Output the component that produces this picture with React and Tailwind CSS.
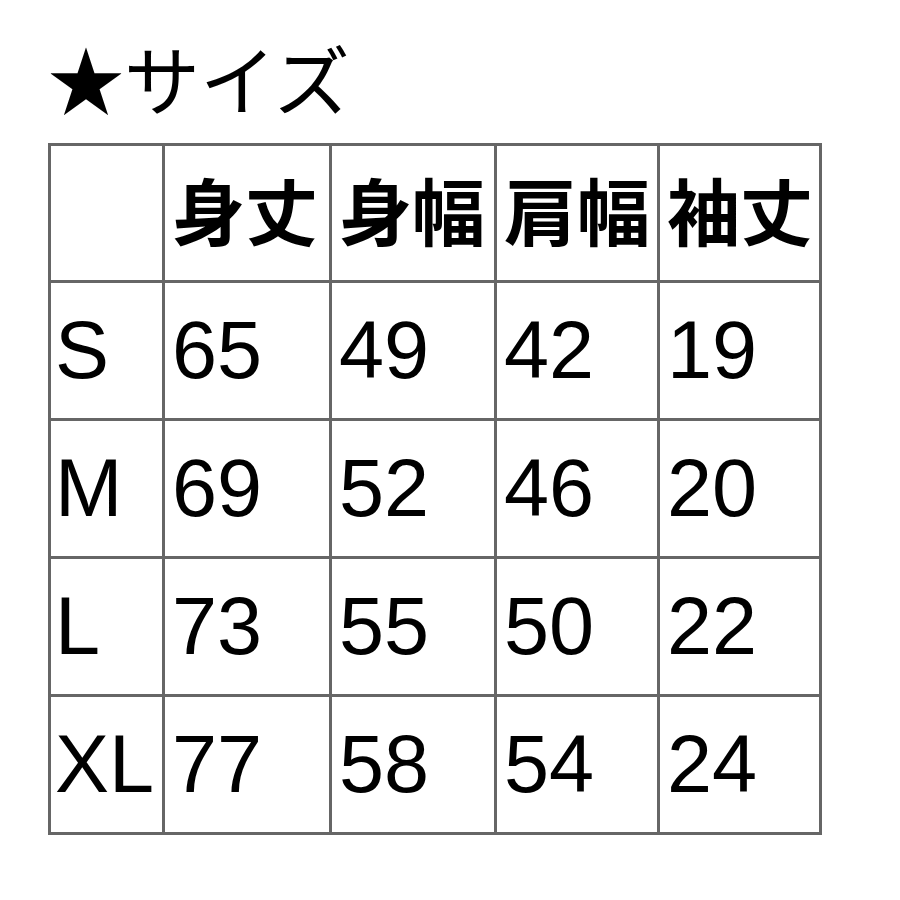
const headers = ["身丈", "身幅", "肩幅", "袖丈"];
const rows = [
  ["S", "65", "49", "42", "19"],
  ["M", "69", "52", "46", "20"],
  ["L", "73", "55", "50", "22"],
  ["XL", "77", "58", "54", "24"],
];
const widths = [114, 167, 165, 163, 162];

export default function App() {
  return (
    <div className="min-h-[900px] bg-white pl-[48px] pt-[29px] text-black">
      <h1
        className="text-[76px] leading-[96px] font-normal mb-[18px]"
        style={{ fontFamily: '"Noto Sans CJK JP", sans-serif' }}
      >
        ★サイズ
      </h1>
      <table className="table-fixed border-collapse w-[771px] border-[3px] border-[#666]">
        <colgroup>
          {widths.map((w, i) => (
            <col key={i} style={{ width: w }} />
          ))}
        </colgroup>
        <thead>
          <tr className="h-[137px]">
            <th className="border-[3px] border-[#666]"></th>
            {headers.map((h) => (
              <th
                key={h}
                className="border-[3px] border-[#666] px-[7px] pb-[10px] text-left text-[73px] font-bold leading-none whitespace-nowrap"
                style={{ fontFamily: '"Noto Sans CJK JP", sans-serif' }}
              >
                {h}
              </th>
            ))}
          </tr>
        </thead>
        <tbody>
          {rows.map((r) => (
            <tr key={r[0]} className="h-[138px]">
              {r.map((c, i) => (
                <td
                  key={i}
                  className={`border-[3px] border-[#666] text-left text-[81px] leading-none whitespace-nowrap ${i === 0 ? "px-[4px]" : "px-[7px]"}`}
                  style={{ fontFamily: '"Liberation Sans", Arial, sans-serif' }}
                >
                  {c}
                </td>
              ))}
            </tr>
          ))}
        </tbody>
      </table>
    </div>
  );
}
